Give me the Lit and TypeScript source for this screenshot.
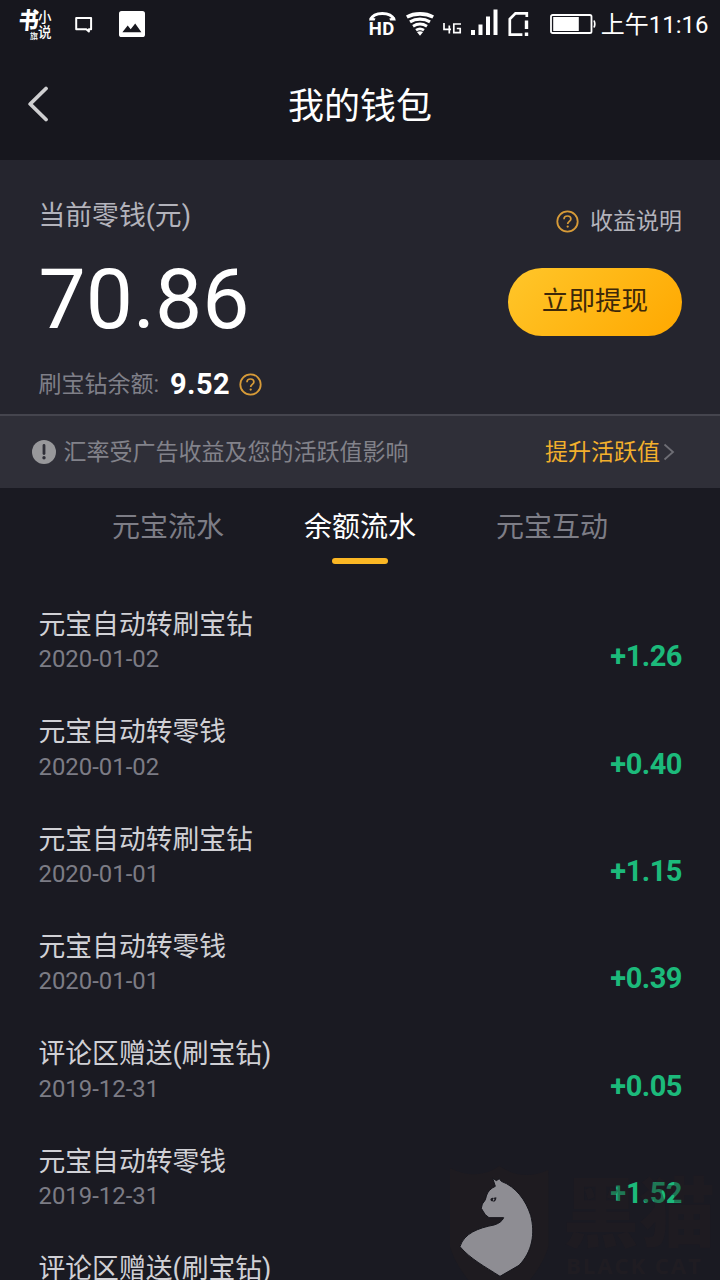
import { LitElement, html, css, svg } from "lit";
import { customElement, property, state } from "lit/decorators.js";

interface Entry {
  title: string;
  date: string;
  amount: string;
}

const ENTRIES: Entry[] = [
  { title: "元宝自动转刷宝钻", date: "2020-01-02", amount: "+1.26" },
  { title: "元宝自动转零钱", date: "2020-01-02", amount: "+0.40" },
  { title: "元宝自动转刷宝钻", date: "2020-01-01", amount: "+1.15" },
  { title: "元宝自动转零钱", date: "2020-01-01", amount: "+0.39" },
  { title: "评论区赠送(刷宝钻)", date: "2019-12-31", amount: "+0.05" },
  { title: "元宝自动转零钱", date: "2019-12-31", amount: "+1.52" },
  { title: "评论区赠送(刷宝钻)", date: "", amount: "" },
];

const helpIcon = svg`
  <circle cx="11.5" cy="11.5" r="10.2" fill="none" stroke="#d79b38" stroke-width="1.8"/>
  <path d="M8 9.3C8 7.1 9.5 6 11.5 6s3.4 1.1 3.4 3c0 2.3-3.2 2.6-3.2 5" fill="none" stroke="#d79b38" stroke-width="1.7"/>
  <circle cx="11.7" cy="16.6" r="1.15" fill="#d79b38"/>`;

@customElement("status-bar")
class StatusBar extends LitElement {
  static styles = css`
    :host { display: flex; height: 48px; align-items: center; justify-content: space-between; padding: 0 11.5px 0 19px; color: #fff; }
    svg { display: block; flex: none; }
    .group { display: flex; height: 48px; }
    .book { display: grid; grid-template-columns: 19px 14px; width: 33px; height: 34px; margin-top: 8px; }
    .brush { position: relative; font: 900 20px/24px "Noto Sans CJK SC", sans-serif; }
    .stroke { display: block; transform: translateX(-0.5px) skewX(-5deg) scaleY(1.18); transform-origin: 0 60%; }
    .seal { position: absolute; left: 11px; top: 23px; font: 500 8px/9px "Noto Sans CJK SC", sans-serif; }
    .small { display: flex; flex-direction: column; font: 500 13.5px/15px "Noto Sans CJK SC", sans-serif; padding-top: 1px; }
    .chat { margin: 15px 0 0 23px; }
    .photo { margin: 11px 0 0 26px; }
    .time { font: 400 24px/50px "Roboto", "Noto Sans CJK SC", sans-serif; white-space: nowrap; margin-left: 5px; }
    .hd { width: 28px; margin-top: 11px; }
    .hdtext { font: 700 18.5px/18px "Roboto", sans-serif; margin-top: -1px; letter-spacing: 0.4px; }
    .wifi { margin: 12px 0 0 9px; }
    .net { margin: 23px 0 0 9px; }
    .bars { margin: 9px 0 0 9px; }
    .sim { margin: 11px 0 0 10px; }
    .battery { margin: 14px 0 0 21px; }
  `;
  render() {
    return html`
      <div class="group">
        <div class="book">
          <div class="brush"><span class="stroke">书</span><span class="seal">旗</span></div>
          <div class="small"><span>小</span><span>说</span></div>
        </div>
        <svg class="chat" width="18" height="18" viewBox="0 0 18 18">
          <path d="M1.2 2.9h14.9v11.3h-2.2v2.4l-2.6-2.4H1.2z" fill="none" stroke="#fff" stroke-width="2" stroke-linejoin="round"/>
        </svg>
        <svg class="photo" width="26" height="26" viewBox="0 0 26 26">
          <rect width="26" height="26" rx="2.6" fill="#fff"/>
          <path d="M3.4 21.2 8.7 14.6l3 3.6 4.5-5.6 6.2 8.6z" fill="#17171e"/>
        </svg>
      </div>
      <div class="group">
        <div class="hd">
          <svg width="27" height="10" viewBox="0 0 27 10">
            <path d="M1.8 8.4C3.4 4.4 7.6 2.4 13.3 2.4s10 2 11.6 6" fill="none" stroke="#fff" stroke-width="3"/>
            <path d="M0 9.6 1 6.2 6.5 7.4 5.6 9.6zM26.8 9.6l-1-3.4-5.5 1.2.9 2.2z" fill="#fff"/>
          </svg>
          <div class="hdtext">HD</div>
        </div>
        <svg class="wifi" width="28" height="24" viewBox="0 0 28 24">
          <g fill="none" stroke="#fff">
            <path d="M.8 5C8.5.8 19.5.8 27.2 5" stroke-width="3.6"/>
            <path d="M4 9.8C10 6.2 18 6.2 24 9.8" stroke-width="3.2"/>
            <path d="M7 14.2C11.4 11.5 16.6 11.5 21 14.2" stroke-width="3"/>
            <path d="M10 18.2C12.7 16.4 15.3 16.4 18 18.2" stroke-width="2.7"/>
          </g>
          <path d="M10.9 19.9q3.1-1.5 6.2 0L14 23.7z" fill="#fff"/>
        </svg>
        <svg class="net" width="19" height="11" viewBox="0 0 19 11">
          <path d="M1 0v6.3h7M6.3 2.5v8M18 1h-7.2v8.6h6.4V5.5h-3.4" fill="none" stroke="#fff" stroke-width="1.7"/>
        </svg>
        <svg class="bars" width="27" height="26" viewBox="0 0 27 26">
          <path d="M0 21h4v5H0zM7.5 15.5h4V26h-4zM15 7.5h4V26h-4zM22.5.5h4V26h-4z" fill="#fff"/>
        </svg>
        <svg class="sim" width="21" height="26" viewBox="0 0 21 26">
          <path d="M18.8 6V2.3H7.5L1.8 8v15.6h12.6" fill="none" stroke="#fff" stroke-width="2.7"/>
          <path d="M16.8 9.5h3.4v8.5h-3.4zM16.8 21.5h3.4v3.5h-3.4z" fill="#fff"/>
        </svg>
        <svg class="battery" width="46" height="20" viewBox="0 0 46 20">
          <rect x="1" y="1" width="40.5" height="18" rx="1.6" fill="none" stroke="#fff" stroke-width="1.8"/>
          <rect x="3.2" y="3" width="25.6" height="14" fill="#fff"/>
          <path d="M44 6.5q1.6 3.5 0 7" fill="none" stroke="#fff" stroke-width="1.7"/>
        </svg>
        <div class="time">上午11:16</div>
      </div>`;
  }
}

@customElement("balance-card")
class BalanceCard extends LitElement {
  static styles = css`
    :host { display: flex; justify-content: space-between; box-sizing: border-box; height: 254px; padding: 38px 38px 0 38.5px; background: #25252e; }
    svg { display: block; flex: none; }
    .left { display: flex; flex-direction: column; }
    .label { font-size: 26.8px; line-height: 36px; color: #b3b3bb; }
    .total { font-size: 84px; line-height: 100px; margin-top: 16px; color: #fff; }
    .sub { display: flex; align-items: center; height: 34px; margin-top: 17px; color: #7f7f88; font-size: 23px; }
    .sub .name { line-height: 30px; padding-top: 1px; }
    .gem { font-size: 29px; line-height: 34px; font-weight: 700; color: #fff; margin: 0 9px 1px 11px; letter-spacing: 0.4px; }
    .right { display: flex; flex-direction: column; align-items: flex-end; }
    .explain { display: flex; align-items: center; gap: 11px; height: 46px; color: #b3b3bb; font-size: 23px; }
    .explain span { line-height: 30px; padding-top: 1px; }
    .withdraw { width: 174px; height: 68px; border: 0; padding: 0 0 3px; margin-top: 24px; border-radius: 34px; background: linear-gradient(135deg, #ffc62a 0%, #ffa800 100%); color: #3d2809; font: 400 26.6px/36px "Roboto", "Noto Sans CJK SC", sans-serif; }
  `;
  render() {
    return html`
      <div class="left">
        <div class="label">当前零钱(元)</div>
        <div class="total">70.86</div>
        <div class="sub">
          <span class="name">刷宝钻余额:</span><span class="gem">9.52</span>
          <svg width="23" height="23" viewBox="0 0 23 23">${helpIcon}</svg>
        </div>
      </div>
      <div class="right">
        <div class="explain"><svg width="23" height="23" viewBox="0 0 23 23">${helpIcon}</svg><span>收益说明</span></div>
        <button class="withdraw">立即提现</button>
      </div>`;
  }
}

@customElement("entry-row")
class EntryRow extends LitElement {
  @property({ attribute: false }) entry!: Entry;
  static styles = css`
    :host { display: flex; justify-content: space-between; height: 107.33px; padding: 0 38px 0 38.5px; }
    .title { font-size: 26.8px; line-height: 36px; color: #d0d0d5; padding-top: 1px; }
    .date { font-size: 23.9px; line-height: 36px; color: #7c7c85; margin-top: -1.6px; }
    .amount { font-size: 29px; letter-spacing: -0.5px; line-height: 36px; font-weight: 700; color: #1cba7b; padding-top: 32.4px; }
  `;
  render() {
    return html`
      <div><div class="title">${this.entry.title}</div><div class="date">${this.entry.date}</div></div>
      <div class="amount">${this.entry.amount}</div>`;
  }
}

@customElement("app-root")
class AppRoot extends LitElement {
  @state() private active = 1;
  static styles = css`
    :host { display: block; position: relative; width: 720px; height: 1280px; overflow: hidden; background: #1a1a22; color: #fff; font-family: "Roboto", "Noto Sans CJK SC", sans-serif; }
    .top { height: 160px; background: #17171e; }
    .nav { display: grid; grid-template-columns: 80px 1fr 80px; align-items: center; height: 112px; }
    .back { display: block; margin-left: 27px; }
    .heading { font-size: 36px; line-height: 48px; text-align: center; padding-top: 5px; }
    .notice { display: flex; align-items: center; box-sizing: border-box; height: 74px; padding: 0 44px 0 31px; border-top: 2px solid #45454e; background: #2f2f38; font-size: 23px; line-height: 30px; color: #82828a; }
    .notice svg { display: block; flex: none; }
    .msg { flex: 1; margin-left: 6.5px; padding-top: 1px; }
    .boost { color: #f3b02c; padding-top: 1px; }
    .tabs { display: grid; grid-template-columns: repeat(3, 192px); justify-content: center; height: 118px; }
    .tab { display: flex; flex-direction: column; align-items: center; padding-top: 20px; font-size: 28px; line-height: 40px; color: #7d7d86; }
    .tab.on { color: #fff; }
    .tab.on::after { content: ""; width: 56px; height: 6px; margin-top: 10px; border-radius: 3px; background: #fbb724; }
    .mark { position: absolute; left: 420px; top: 1130px; width: 300px; height: 150px; overflow: hidden; }
    .mark svg { position: absolute; left: 0; top: 0; }
    .name { position: absolute; left: 143px; top: 38px; font: 900 76px/80px "Noto Sans CJK SC", sans-serif; color: rgba(35, 29, 33, 0.42); white-space: nowrap; }
    .latin { position: absolute; left: 146px; top: 123px; font: 700 22px/24px "Open Sans", sans-serif; color: rgba(36, 31, 35, 0.6); letter-spacing: 2px; white-space: nowrap; }
  `;
  render() {
    const tabs = ["元宝流水", "余额流水", "元宝互动"];
    return html`
      <div class="top">
        <status-bar></status-bar>
        <div class="nav">
          <svg class="back" width="22" height="36" viewBox="0 0 22 36">
            <path d="M19 2.5 3.2 18 19 33.5" fill="none" stroke="#cfcfd1" stroke-width="3.8" stroke-linecap="round" stroke-linejoin="round"/>
          </svg>
          <div class="heading">我的钱包</div>
        </div>
      </div>
      <balance-card></balance-card>
      <div class="notice">
        <svg width="26" height="26" viewBox="0 0 26 26">
          <circle cx="13" cy="13" r="12" fill="#98989b"/>
          <path d="M13 6.5v8" stroke="#2f2f38" stroke-width="2.8" stroke-linecap="round"/>
          <circle cx="13" cy="18.8" r="1.7" fill="#2f2f38"/>
        </svg>
        <span class="msg">汇率受广告收益及您的活跃值影响</span>
        <span class="boost">提升活跃值</span>
        <svg width="16" height="20" viewBox="0 0 16 20"><path d="M4.5 2.5 13 10 4.5 17.5" fill="none" stroke="#6e6e75" stroke-width="1.8"/></svg>
      </div>
      <div class="tabs">
        ${tabs.map((t, i) => html`<div class="tab ${i === this.active ? "on" : ""}" @click=${() => (this.active = i)}>${t}</div>`)}
      </div>
      ${ENTRIES.map((e) => html`<entry-row .entry=${e}></entry-row>`)}
      <div class="mark">
        <div class="name">黑猫</div>
        <div class="latin">BLACK CAT</div>
        <svg width="300" height="150" viewBox="0 0 900 450">
          <path d="M90 114Q170 155 238 108Q305 155 385 120V350Q370 400 330 450H145Q105 400 90 350Z" fill="#1e1b20"/>
          <path d="M218 144L229 152L238 146L244 154C288 170 318 212 332 256C346 310 337 365 297 406L240 439C195 410 150 386 120 350C132 310 175 294 222 285Q245 278 251 263L207 263L196 254Q188 242 184 235L187 222Q199 209 199 198Q205 178 226 169Z" fill="#8e8d93" stroke="#15151b" stroke-width="3"/>
          <path d="M211 208Q214 201 222 204L218 214Q212 215 211 208ZM222 203L229 202Q230 212 220 217Z" fill="#1c1b22"/>
          <circle cx="221" cy="208" r="2.5" fill="#8e8d93"/>
        </svg>
      </div>`;
  }
}
